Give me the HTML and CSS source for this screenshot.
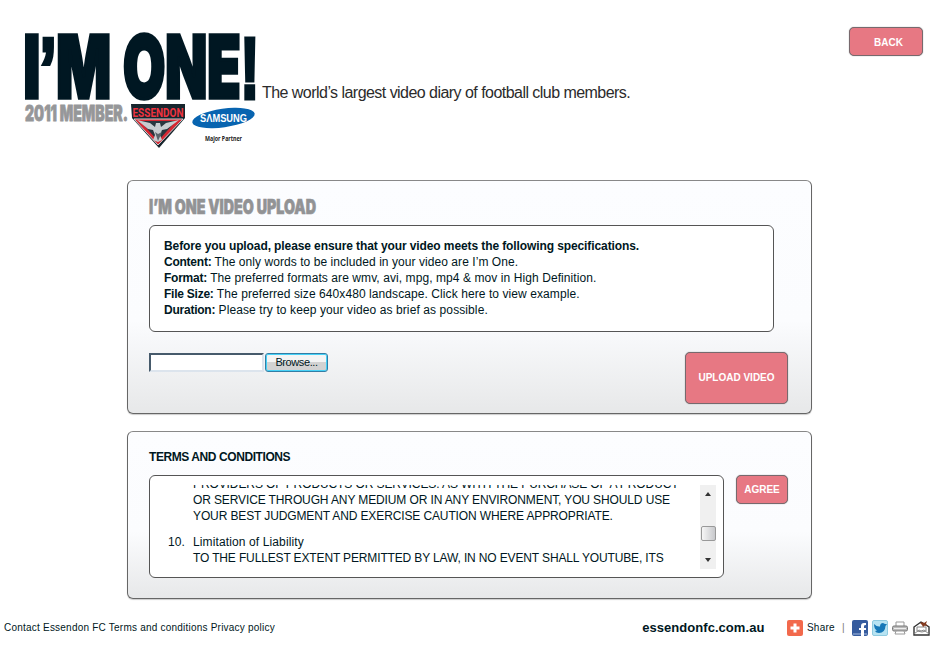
FILE: index.html
```html
<!DOCTYPE html>
<html lang="en">
<head>
<meta charset="utf-8">
<title>I'm One Video Upload</title>
<link rel="stylesheet" href="styles.css">
</head>
<body>
<header class="header">
  <svg class="brand" width="240" height="122" viewBox="20 30 240 122">
    <g class="brand-name">
      <text x="23.500" y="97.500" font-size="86" textLength="87.500" lengthAdjust="spacingAndGlyphs">I<tspan class="mark">’</tspan>M</text>
      <text x="123" y="97.500" font-size="86" textLength="136" lengthAdjust="spacingAndGlyphs">ONE<tspan class="mark">!</tspan></text>
    </g>
    <text class="brand-sub" x="25" y="121" font-size="21" textLength="103" lengthAdjust="spacingAndGlyphs">2011 MEMBER.</text>
    <path d="M131 104H185V118L159 148L132 118Z" fill="#17252d"/>
    <path d="M134 119H183L158 145Z" fill="#d52732" stroke="#cbd0d2"/>
    <path d="M140 121H176L158 141Z" fill="#29363e"/>
    <path d="M137 120l13 3 5 4 1-4h4l1 4 5-4 13-3-12 9-5 1-2 5 2 5-4 2-5-2 2-5-2-5-5-1z" fill="#c7cccf"/>
    <path d="M155 132l3 9 4-9-4 2z" fill="#596269"/>
    <text class="club" x="132.500" y="117" textLength="51" lengthAdjust="spacingAndGlyphs">ESSENDON</text>
    <ellipse cx="223.500" cy="118" rx="31.500" ry="9.300" transform="rotate(-8 223.500 118)" fill="#0864b0"/>
    <text class="samsung" x="200" y="122" textLength="47" lengthAdjust="spacingAndGlyphs">SΛMSUNG</text>
    <text class="partner" x="205" y="141" textLength="37" lengthAdjust="spacingAndGlyphs">Major Partner</text>
  </svg>
  <p class="tagline">The world’s largest video diary of football club members.</p>
  <button class="btn back">BACK</button>
</header>

<main>
  <section class="panel upload">
    <svg class="title" width="170" height="22" viewBox="0 0 170 22"><text x="0" y="18" textLength="167" lengthAdjust="spacingAndGlyphs">I’M ONE VIDEO UPLOAD</text></svg>
    <div class="specs">
      <p class="l1"><b>Before you upload, please ensure that your video meets the following specifications.</b></p>
      <p class="l2"><b>Content:</b> The only words to be included in your video are I’m One.</p>
      <p class="l3"><b>Format:</b> The preferred formats are wmv, avi, mpg, mp4 &amp; mov in High Definition.</p>
      <p class="l4"><b>File Size:</b> The preferred size 640x480 landscape. Click here to view example.</p>
      <p class="l5"><b>Duration:</b> Please try to keep your video as brief as possible.</p>
    </div>
    <div class="actions">
      <div class="file"><span class="field"></span><button class="browse">Browse...</button></div>
      <button class="btn send">UPLOAD VIDEO</button>
    </div>
  </section>

  <section class="panel terms">
    <h2>TERMS AND CONDITIONS</h2>
    <div class="terms-row">
      <div class="terms-box">
        <div class="scroll">
          <div class="copy">
            <p class="t1">PROVIDERS OF PRODUCTS OR SERVICES. AS WITH THE PURCHASE OF A PRODUCT</p>
            <p class="t2">OR SERVICE THROUGH ANY MEDIUM OR IN ANY ENVIRONMENT, YOU SHOULD USE</p>
            <p class="t3">YOUR BEST JUDGMENT AND EXERCISE CAUTION WHERE APPROPRIATE.</p>
            <p class="item"><span class="num">10.</span>Limitation of Liability</p>
            <p class="t4">TO THE FULLEST EXTENT PERMITTED BY LAW, IN NO EVENT SHALL YOUTUBE, ITS</p>
          </div>
          <div class="bar"><i class="up"></i><i class="thumb"></i><i class="down"></i></div>
        </div>
      </div>
      <button class="btn agree">AGREE</button>
    </div>
  </section>
</main>

<footer class="footer">
  <nav class="links">Contact Essendon FC Terms and conditions Privacy policy</nav>
  <strong class="site">essendonfc.com.au</strong>
  <div class="share">
    <svg width="16" height="16"><rect width="16" height="16" rx="2" fill="#f2694c"/><path d="M8 3.500v9M3.500 8h9" stroke="#fff" stroke-width="3"/></svg>
    <span class="share-text">Share</span><span class="sep">|</span>
    <svg width="16" height="16"><rect width="16" height="16" rx="2" fill="#365c9e"/><path d="M1 13h14v2H1z" fill="#6e8cc0"/><path d="M14 3h-2q-3 0-3 3v2H7v2h2v6h3v-6h2V8h-2V6q0-1 2-1z" fill="#fff"/></svg>
    <svg class="gap4" width="16" height="16"><rect x=".5" y=".5" width="15" height="15" rx="1.500" fill="#b7e3f2" stroke="#8fcbe0"/><path d="M2 4q3 3 6 2.500Q8 3 11 3l2 1 2 0-1.500 2Q13 13 7 13q-3 0-4-2l2-.5Q2 9 2 4z" fill="#1678b8"/></svg>
    <svg class="gap4" width="16" height="16" fill="none"><path d="M4 6V2h8v4" fill="#fff" stroke="#999"/><rect x=".5" y="6" width="15" height="5" rx="1.500" fill="#bbb" stroke="#777"/><path d="M2 8.500h12" stroke="#eee"/><path d="M4 11h8l1 3H3z" fill="#fff" stroke="#999"/></svg>
    <svg class="gap5" width="17" height="16" fill="none"><path d="M1 7l7-5 8 5v8H1z" fill="#fff" stroke="#333" stroke-width="1.400"/><path d="M4 7h9v4l-4 1-5-1z" fill="#fff" stroke="#888"/><path d="M1 14l5-4 2 1 3-1 5 4" stroke="#888"/><path d="M7 3l2-1 2 1 3-2-1 3 2 2-3-.5-2 1.500-1-2z" fill="#843b20"/></svg>
  </div>
</footer>
</body>
</html>
```

FILE: styles.css
```css
* { box-sizing: border-box; }
body { margin: 0; width: 948px; height: 650px; overflow: hidden; background: #fff; color: #001722; font: 12px/16px "Liberation Sans", Arial, sans-serif; }
p, h2 { margin: 0; white-space: nowrap; }
button { font-family: inherit; padding: 0; margin: 0; }
.header { display: flex; height: 180px; padding: 27px 25px 0 20px; align-items: flex-start; }
.brand { display: block; flex: none; margin-top: 3px; overflow: visible; }
.brand-name { fill: #001722; stroke: #001722; stroke-width: 3.6; font-family: Inter, sans-serif; font-weight: 900; }
.mark { font-family: "Liberation Sans", Arial, sans-serif; stroke-width: 5; }
.brand-sub { fill: #969799; stroke: #969799; stroke-width: .8; font-family: Inter, sans-serif; font-weight: 900; }
.club { fill: #ee3340; font: bold 13px Roboto, sans-serif; }
.samsung { fill: #fff; font: bold 10px "Liberation Sans", sans-serif; }
.partner { fill: #222; font: bold 6.5px "Noto Sans", sans-serif; }
.tagline { margin: 56px 0 0 2px; color: #2b2b2b; font-size: 16px; line-height: 20px; letter-spacing: -.54px; }
.btn { background: #e77883; border: 1px solid #77696d; border-radius: 5px; color: #fff; font-weight: bold; font-size: 10px; line-height: 12px; box-shadow: 0 0 1px #777; }
.back { width: 74px; height: 29px; margin-left: auto; padding: 2px 0 0 5px; }
main { width: 685px; margin-left: 127px; }
.panel { border: 1px solid #666; border-top-color: #888; border-radius: 6px; background: linear-gradient(#fcfdff 0, #fbfcfe 60%, #e7e8e9 100%); box-shadow: 0 1px 1px #ccc; }
.upload { height: 234px; padding: 15px 0 0 21px; }
.title { display: block; overflow: visible; font: 900 20px Inter, sans-serif; fill: #929395; stroke: #929395; stroke-width: .7; }
.specs { width: 625px; height: 107px; margin-top: 7px; padding: 12px 14px; border: 1px solid #555; border-radius: 6px; background: #fff; }
.specs b { letter-spacing: -.24px; }
.specs .l1 b { letter-spacing: -.1px; }
.l2 { letter-spacing: .06px; }
.l3, .l4 { letter-spacing: .08px; }
.l5 { letter-spacing: .1px; }
.actions { display: flex; justify-content: space-between; margin: 20px 23px 0 0; }
.file { display: flex; align-items: flex-start; padding-top: 1px; gap: 1px; }
.field { width: 115px; height: 19px; background: #fff; border: 2px solid #465a6b; border-right-color: #dce4ed; border-bottom-color: #dce4ed; }
.browse { width: 63px; height: 19px; color: #001722; font-size: 11px; line-height: 15px; border: 1px solid #327da5; border-radius: 3px; box-shadow: inset 0 0 0 1px #46d1f7; background: linear-gradient(#f4f4f4 45%, #d2d2d2 50%); letter-spacing: -.4px; }
.send { width: 103px; height: 52px; }
.terms { height: 168px; margin-top: 17px; padding: 17px 0 0 21px; }
h2 { font-size: 12px; line-height: 16px; letter-spacing: -.42px; }
.terms-row { display: flex; align-items: flex-start; gap: 12px; margin-top: 10px; }
.terms-box { width: 575px; height: 103px; padding: 9px 7px 8px 14px; background: #fff; border: 1px solid #555; border-radius: 6px; }
.scroll { height: 84px; display: flex; overflow: hidden; justify-content: space-between; }
.copy { margin-top: -9px; padding-left: 29px; }
.t1 { letter-spacing: -.1px; }
.t2, .t3 { letter-spacing: -.12px; }
.t4 { letter-spacing: -.14px; }
.item { display: flex; margin: 10px 0 0 -25px; letter-spacing: .12px; }
.num { width: 25px; }
.bar { width: 16px; height: 84px; background: #f0f0f0; display: flex; flex-direction: column; align-items: center; }
.up { margin-top: 7px; border: 3.5px solid transparent; border-top: 0; border-bottom: 4px solid #333; }
.thumb { margin-top: 30px; width: 15px; height: 15px; background: linear-gradient(90deg, #f6f6f6, #c8c9cc); border: 1px solid #999; border-radius: 2px; }
.down { margin-top: 17px; border: 3.5px solid transparent; border-bottom: 0; border-top: 4px solid #333; }
.agree { width: 52px; height: 29px; }
.footer { display: flex; align-items: center; height: 16px; margin-top: 21px; padding: 0 18px 0 4px; font-size: 10px; }
.links { width: 639px; letter-spacing: .22px; }
.site { width: 144px; font-size: 13px; letter-spacing: .05px; }
.share { display: flex; align-items: center; margin-left: 1px; }
.share-text { margin-left: 4px; width: 35px; letter-spacing: .2px; }
.sep { width: 10px; color: #777; }
.gap4 { margin-left: 4px; }
.gap5 { margin-left: 5px; }
```
